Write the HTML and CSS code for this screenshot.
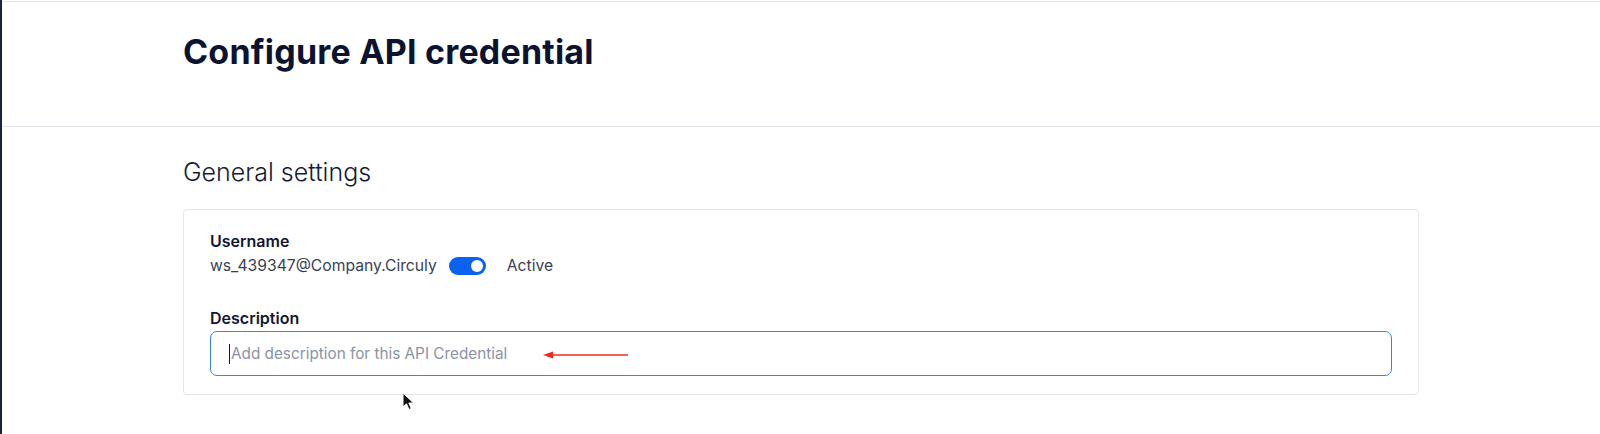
FILE: index.html
```html
<!DOCTYPE html>
<html lang="en">
<head>
<meta charset="utf-8">
<title>Configure API credential</title>
<link rel="stylesheet" href="styles.css">
</head>
<body>
<div class="app">
  <aside class="sidebar"></aside>
  <main class="main">
    <header class="page-header">
      <h1 class="page-title">Configure API credential</h1>
    </header>
    <section class="content">
      <h2 class="section-title">General settings</h2>
      <div class="card">
        <div class="field">
          <div class="label">Username</div>
          <div class="user-row">
            <span class="user-name">ws_439347@Company.Circuly</span>
            <span class="toggle"><span class="knob"></span></span>
            <span class="status">Active</span>
          </div>
        </div>
        <div class="field field-desc">
          <div class="label">Description</div>
          <div class="input">
            <span class="caret"></span>
            <span class="placeholder">Add description for this API Credential</span>
            <svg class="annotation" width="86" height="10" viewBox="0 0 86 10">
              <line x1="6" y1="5" x2="85" y2="5" stroke="#f02a1e" stroke-width="1.6"/>
              <polygon points="0,5 10,1.5 10,8.5" fill="#f02a1e"/>
            </svg>
          </div>
        </div>
      </div>
    </section>
  </main>
</div>
<svg class="pointer" width="14" height="20" viewBox="0 0 14 20">
  <path d="M1 1 L1 15 L4.5 11.8 L7 17.5 L9.3 16.5 L6.8 11 L11.5 11 Z" fill="#111" stroke="#fff" stroke-width="1"/>
</svg>
</body>
</html>
```
FILE: styles.css
```css
* { box-sizing: border-box; }
html, body {
  margin: 0;
  padding: 0;
  background: #ffffff;
  font-family: Inter, "Noto Sans", "Liberation Sans", sans-serif;
  color: #0f1631;
}
.app {
  display: flex;
  min-height: 434px;
}
.sidebar {
  width: 2px;
  flex: none;
  background: #1c2140;
}
.main {
  flex: 1;
  padding-top: 1px;
}
.page-header {
  border-top: 1px solid #e3e6ec;
  border-bottom: 1px solid #e3e6ec;
  height: 126px;
  padding: 29px 0 0 181px;
}
.page-title {
  margin: 0;
  font-size: 34px;
  line-height: 42px;
  font-weight: 700;
  color: #0c1330;
  letter-spacing: 0.2px;
}
.content {
  padding: 29px 0 0 181px;
}
.section-title {
  margin: 0 0 20px;
  font-size: 25px;
  line-height: 33px;
  font-weight: 300;
  color: #161b33;
}
.card {
  width: 1236px;
  border: 1px solid #e4e6ea;
  border-radius: 4px;
  padding: 20px 26px 18px;
}
.label {
  font-size: 16px;
  line-height: 22px;
  font-weight: 600;
  color: #111733;
}
.user-row {
  display: flex;
  align-items: center;
  height: 27px;
}
.user-name {
  font-size: 15.7px;
  color: #3a3f55;
}
.toggle {
  margin-left: 12px;
  width: 37px;
  height: 18px;
  border-radius: 9px;
  background: #0b62ef;
  position: relative;
  flex: none;
}
.knob {
  position: absolute;
  right: 3px;
  top: 3px;
  width: 12px;
  height: 12px;
  border-radius: 50%;
  background: #fff;
}
.status {
  margin-left: 21px;
  font-size: 15.7px;
  color: #3a3f55;
}
.field-desc {
  margin-top: 28px;
}
.input {
  position: relative;
  margin-top: 2px;
  height: 45px;
  border: 1.5px solid #3d82f2;
  border-radius: 7px;
  display: flex;
  align-items: center;
  padding-left: 18px;
}
.caret {
  width: 1px;
  height: 20px;
  background: #1a1a1a;
  margin-right: 1px;
}
.placeholder {
  font-size: 15.3px;
  color: #8a93a6;
}
.annotation {
  position: absolute;
  left: 332px;
  top: 18px;
}
.pointer {
  position: absolute;
  left: 402px;
  top: 392px;
}
```
